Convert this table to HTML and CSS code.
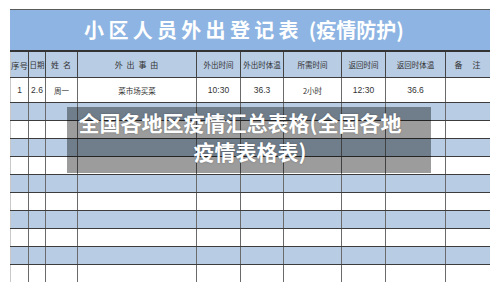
FILE: index.html
```html
<!DOCTYPE html>
<html lang="zh">
<head>
<meta charset="utf-8">
<link rel="stylesheet" href="styles.css">
</head>
<body>
<div class="sheet">
  <div class="title">小区人员外出登记表<span class="sub">(疫情防护)</span></div>
  <table class="grid">
    <colgroup>
      <col style="width:18px"><col style="width:17px"><col style="width:32px"><col style="width:119px"><col style="width:44px"><col style="width:43px"><col style="width:58px"><col style="width:44px"><col style="width:60px"><col style="width:45px">
    </colgroup>
    <tr class="head">
      <td class="big">序号</td><td>日期</td><td class="sp">姓 名</td><td class="sp">外 出 事 由</td><td>外出时间</td><td>外出时体温</td><td>所需时间</td><td>返回时间</td><td>返回时体温</td><td class="sp">备　注</td>
    </tr>
    <tr class="data">
      <td class="num">1</td><td class="num">2.6</td><td>周一</td><td>菜市场买菜</td><td class="num">10:30</td><td class="num">36.3</td><td>2小时</td><td class="num">12:30</td><td class="num">36.6</td><td></td>
    </tr>
    <tr class="blue"><td></td><td></td><td></td><td></td><td></td><td></td><td></td><td></td><td></td><td></td></tr>
    <tr class="white"><td></td><td></td><td></td><td></td><td></td><td></td><td></td><td></td><td></td><td></td></tr>
    <tr class="blue"><td></td><td></td><td></td><td></td><td></td><td></td><td></td><td></td><td></td><td></td></tr>
    <tr class="white"><td></td><td></td><td></td><td></td><td></td><td></td><td></td><td></td><td></td><td></td></tr>
    <tr class="blue"><td></td><td></td><td></td><td></td><td></td><td></td><td></td><td></td><td></td><td></td></tr>
    <tr class="white"><td></td><td></td><td></td><td></td><td></td><td></td><td></td><td></td><td></td><td></td></tr>
    <tr class="blue"><td></td><td></td><td></td><td></td><td></td><td></td><td></td><td></td><td></td><td></td></tr>
    <tr class="white"><td></td><td></td><td></td><td></td><td></td><td></td><td></td><td></td><td></td><td></td></tr>
    <tr class="blue"><td></td><td></td><td></td><td></td><td></td><td></td><td></td><td></td><td></td><td></td></tr>
    <tr class="white"><td></td><td></td><td></td><td></td><td></td><td></td><td></td><td></td><td></td><td></td></tr>
  </table>
  <div class="overlay">
    <span class="line1">全国各地区疫情汇总表格(全国各地</span>
    <span class="line2">疫情表格表)</span>
  </div>
</div>
</body>
</html>
```

FILE: styles.css
```css
html, body {
  margin: 0;
  padding: 0;
  background: #ffffff;
  overflow: hidden;
  height: 282px;
}
body {
  font-family: "Noto Sans CJK SC", "Noto Sans", sans-serif;
}
.sheet {
  position: relative;
  margin: 9px 0 0 10px;
  width: 480px;
  height: 273px;
  overflow: hidden;
}
.title {
  height: 40px;
  border-top: 1px solid #5a5a5a;
  background: #8db4e2;
  color: #ffffff;
  font-size: 20px;
  font-weight: 700;
  letter-spacing: 4.3px;
  line-height: 40px;
  text-align: center;
  padding-right: 12px;
}
.title .sub {
  letter-spacing: 0;
  margin-left: 6px;
}
.grid {
  border-collapse: collapse;
  table-layout: fixed;
  width: 480px;
  border-top: 2px solid #333;
}
.grid td {
  border-left: 1px solid #6a6a6a;
  border-bottom: 1px solid #3c3c3c;
  padding: 0;
  text-align: center;
  color: #333;
  font-size: 7.5px;
  white-space: nowrap;
  overflow: hidden;
}
.grid td:first-child {
  border-left: 1px solid #c8c8c8;
}
.grid td:last-child {
  border-right: 1px solid #444;
}
.head td {
  height: 25px;
  background: #b8cce4;
  border-left-color: #444;
}
.head td.big {
  font-size: 8.5px;
}
.head td.sp {
  font-size: 8px;
  letter-spacing: 1px;
}
.data td {
  height: 24px;
  background: #ffffff;
}
.data td.num {
  font-family: "Liberation Sans", "Noto Sans", sans-serif;
  font-size: 8.5px;
}
.blue td {
  height: 17px;
  background: #b8cce4;
}
.white td {
  height: 17px;
  background: #ffffff;
}
.overlay {
  position: absolute;
  left: 57px;
  top: 98px;
  width: 364px;
  height: 66px;
  box-sizing: border-box;
  padding-top: 1px;
  background: rgba(0, 0, 0, 0.39);
  color: #ffffff;
  font-size: 21px;
  font-weight: 700;
  line-height: 29px;
  text-align: center;
  text-shadow: 0 0 2px rgba(0, 0, 0, 0.3);
}
.overlay .line1, .overlay .line2 {
  display: block;
  white-space: nowrap;
}
.overlay .line1 {
  padding-right: 18px;
}
.overlay .line2 {
  padding-left: 2px;
}
```
